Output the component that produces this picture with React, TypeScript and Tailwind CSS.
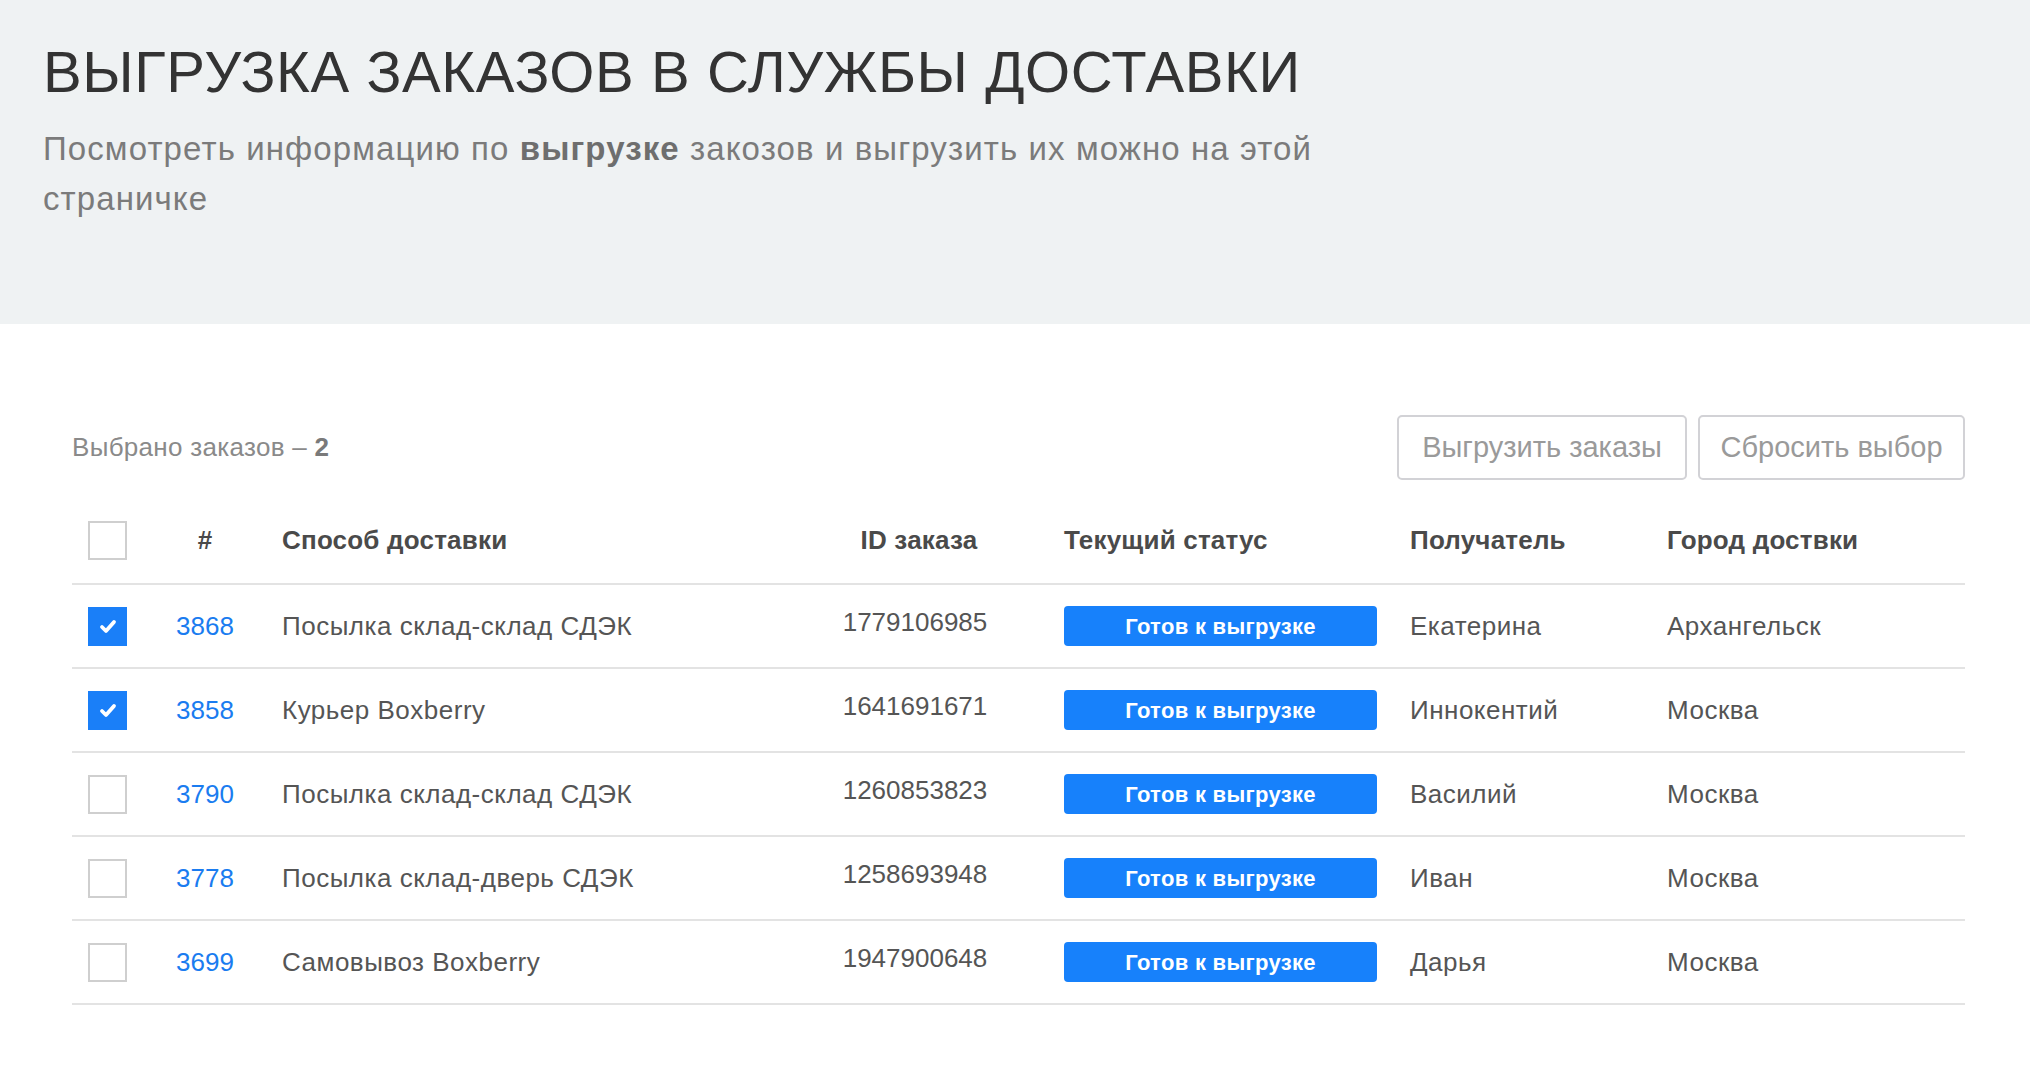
import React from "react";

const rows = [
  { checked: true, num: "3868", method: "Посылка склад-склад СДЭК", id: "1779106985", name: "Екатерина", city: "Архангельск" },
  { checked: true, num: "3858", method: "Курьер Boxberry", id: "1641691671", name: "Иннокентий", city: "Москва" },
  { checked: false, num: "3790", method: "Посылка склад-склад СДЭК", id: "1260853823", name: "Василий", city: "Москва" },
  { checked: false, num: "3778", method: "Посылка склад-дверь СДЭК", id: "1258693948", name: "Иван", city: "Москва" },
  { checked: false, num: "3699", method: "Самовывоз Boxberry", id: "1947900648", name: "Дарья", city: "Москва" },
];

function Box({ checked }: { checked: boolean }) {
  if (checked) {
    return (
      <div className="w-[39px] h-[39px] bg-[#1a7ff8] flex items-center justify-center">
        <svg width="18" height="15" viewBox="0 0 18 15">
          <path d="M3 8 L7 12 L15 3" stroke="white" strokeWidth="3.8" fill="none" strokeLinecap="round" strokeLinejoin="round" />
        </svg>
      </div>
    );
  }
  return <div className="w-[39px] h-[39px] border-2 border-[#cfcfcf] bg-white" />;
}

const grid = "grid grid-cols-[104px_106px_538px_190px_400px_257px_1fr] items-center";

export default function App() {
  return (
    <div className="min-h-screen bg-white" style={{ fontFamily: '"Liberation Sans", Arial, sans-serif' }}>
      <div className="bg-[#eff2f3] h-[324px] pl-[43px] pt-[40px]">
        <h1 className="text-[58px] leading-[64px] text-[#333] font-light tracking-[0.6px]">ВЫГРУЗКА ЗАКАЗОВ В СЛУЖБЫ ДОСТАВКИ</h1>
        <p className="mt-[20px] text-[33px] leading-[50px] text-[#7b7b7b] tracking-[1.1px]">
          Посмотреть информацию по <b className="text-[#6e6e6e]">выгрузке</b> закозов и выгрузить их можно на этой
          <br />
          страничке
        </p>
      </div>

      <div className="pl-[72px] pr-[65px] pt-[91px]">
        <div className="flex items-center justify-between h-[65px]">
          <div className="text-[26px] tracking-[0.3px] text-[#8a8a8a]">
            Выбрано заказов – <b className="text-[#7a7a7a]">2</b>
          </div>
          <div className="flex gap-[11px]">
            <button className="h-[65px] w-[290px] border-2 border-[#d2d2d6] rounded-[5px] text-[29px] text-[#9a9a9a] bg-white">Выгрузить заказы</button>
            <button className="h-[65px] w-[267px] border-2 border-[#d2d2d6] rounded-[5px] text-[29px] text-[#9a9a9a] bg-white">Сбросить выбор</button>
          </div>
        </div>

        <div className="mt-[17px]">
          <div className={`${grid} h-[88px] border-b-2 border-[#e3e3e3] text-[26px] tracking-[0.2px] font-bold text-[#4a4a4a]`}>
            <div className="pl-[16px]"><Box checked={false} /></div>
            <div className="w-[58px] text-center">#</div>
            <div>Способ доставки</div>
            <div className="text-center pl-[8px]">ID заказа</div>
            <div className="pl-[54px]">Текущий статус</div>
            <div>Получатель</div>
            <div>Город доствки</div>
          </div>
          {rows.map((r) => (
            <div key={r.num} className={`${grid} h-[84px] border-b-2 border-[#e3e3e3] text-[26px] tracking-[0.5px] text-[#555]`}>
              <div className="pl-[16px]"><Box checked={r.checked} /></div>
              <div className="w-[58px] text-center text-[#1a7cf0] tracking-[0px]">{r.num}</div>
              <div>{r.method}</div>
              <div className="text-center pb-[8px] tracking-[0px]">{r.id}</div>
              <div className="pl-[54px]">
                <div className="w-[313px] h-[40px] rounded-[4px] bg-[#1781fb] text-white text-[22px] tracking-[0.3px] font-bold flex items-center justify-center">
                  Готов к выгрузке
                </div>
              </div>
              <div>{r.name}</div>
              <div>{r.city}</div>
            </div>
          ))}
        </div>
      </div>
    </div>
  );
}
